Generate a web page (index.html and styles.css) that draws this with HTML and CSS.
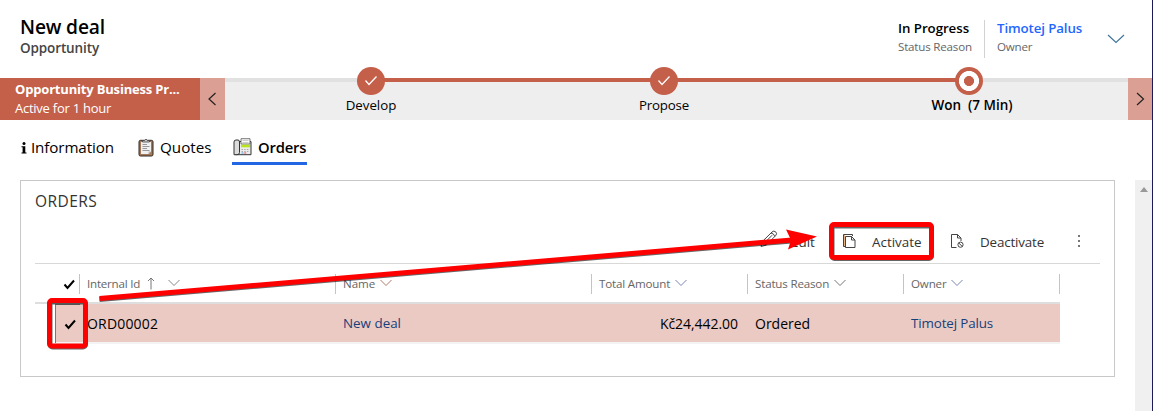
FILE: index.html
```html
<!DOCTYPE html>
<html lang="en">
<head>
<meta charset="utf-8">
<title>New deal - Opportunity</title>
<link rel="stylesheet" href="styles.css">
</head>
<body>
<div class="app">
  <header class="header">
    <div class="record">
      <h1 class="record-title">New deal</h1>
      <div class="record-type">Opportunity</div>
    </div>
    <div class="header-fields">
      <div class="field field-status">
        <div class="field-value status-value">In Progress</div>
        <div class="field-label">Status Reason</div>
      </div>
      <div class="field field-owner">
        <div class="field-value owner-value">Timotej Palus</div>
        <div class="field-label">Owner</div>
      </div>
      <svg class="header-chevron" width="18" height="10" viewBox="0 0 18 10"><path d="M1 1l8 7.500L17 1"/></svg>
    </div>
  </header>

  <section class="process">
    <div class="process-name">
      <div class="process-title">Opportunity Business Pr...</div>
      <div class="process-time">Active for 1 hour</div>
    </div>
    <div class="process-nav prev"><svg width="10" height="14" viewBox="0 0 10 14"><path d="M7.500 1L1 7l6.500 6"/></svg></div>
    <div class="stages">
      <div class="stage stage-first">
        <div class="node"><svg width="14" height="12" viewBox="0 0 14 12"><path d="M1.500 5.500l3.500 4L12.500 1.500"/></svg></div>
        <div class="stage-name">Develop</div>
      </div>
      <div class="stage stage-done">
        <div class="node"><svg width="14" height="12" viewBox="0 0 14 12"><path d="M1.500 5.500l3.500 4L12.500 1.500"/></svg></div>
        <div class="stage-name propose">Propose</div>
      </div>
      <div class="stage stage-current">
        <div class="node node-current"></div>
        <div class="stage-name current-name">Won&nbsp; (7 Min)</div>
      </div>
    </div>
    <div class="process-nav next"><svg width="10" height="14" viewBox="0 0 10 14"><path d="M2 1l6.500 6L2 13"/></svg></div>
  </section>

  <nav class="tabs">
    <div class="tab tab-info">
      <svg width="6" height="12" viewBox="0 0 6 12"><circle cx="3" cy="1.600" r="1.500"/><path d="M.5 4.200H4.300V10.500H5.500V11.500H.5V10.500H1.600V5.200H.5z"/></svg>
      <span>Information</span>
    </div>
    <div class="tab tab-quotes">
      <svg width="16" height="19" viewBox="0 0 16 19">
        <rect x="1" y="2.300" width="14" height="15.700" rx="1.500" fill="#a5785a" stroke="#2e2825"/>
        <path d="M3 4h10v9.500L10.500 16H3z" fill="#f0f0f0"/>
        <path d="M10.500 16v-2.500H13z" fill="#b8b8b8"/>
        <path d="M4.500 4V2.500h2Q8-.3 9.500 2.500h2V4z" fill="#ccc" stroke="#444" stroke-width=".8"/>
        <path d="M4.500 6.500h4.500M4.500 8.500h7M4.500 10.500h4.500M4.500 12.500h7" stroke="#999"/>
      </svg>
      <span>Quotes</span>
    </div>
    <div class="tab tab-orders">
      <svg width="19" height="18" viewBox="0 0 19 18">
        <path d="M6 3.500h12v13.200H2.500z" fill="#ececec" stroke="#333"/>
        <path d="M1 4Q1 2 3 2h2Q6.500 2 6.500 4v10.500Q6.500 16.700 4 16.700H1z" fill="#dcdcdc" stroke="#333"/>
        <path d="M8 6V.7h9V6z" fill="#fafafa" stroke="#555" stroke-width=".8"/>
        <path d="M9.500 2.500h6M9.500 4.500h6" stroke="#ccc"/>
        <path d="M8 6.700h9v2.600H8z" fill="#b9e51d"/>
        <path d="M8.500 11.500h1.500m1.200 0h1.500m1.200 0h1.500m-6.900 2h1.500m1.200 0h1.500m1.200 0h1.500" stroke="#aaa"/>
        <path d="M8.500 15h2" stroke="#39a4e8"/><path d="M11.200 15h2" stroke="#e64553"/>
      </svg>
      <span>Orders</span>
    </div>
  </nav>

  <div class="body">
    <section class="panel">
      <h2 class="panel-title">ORDERS</h2>
      <div class="toolbar">
        <div class="command edit">
          <svg width="18" height="18" viewBox="0 0 18 18"><path d="M1 16.500l1.200-4.800L12 2q1.700-1.700 3.600-.2 1.900 1.700.2 3.700L6 15.200zM2.300 11.700q2.700.2 3.600 3.400M11 3q3 .5 3.800 3.400M4.500 13L12 5.300"/></svg>
          <span>Edit</span>
        </div>
        <div class="command activate">
          <svg width="14" height="16" viewBox="0 0 14 16"><path class="tint" d="M2 13.500V2"/><path d="M3 13.500H1.500V1.500h9V3M3.500 3.500h6l3.500 3.500v7.500H3.500zM9.500 3.500V7H13"/></svg>
          <span>Activate</span>
        </div>
        <div class="command deactivate">
          <svg width="14" height="16" viewBox="0 0 14 16"><path d="M6.500 14.500h-5V1.500h6l3.500 3.500v3M7.500 1.500V5H11"/><circle cx="10.500" cy="11.700" r="2.600"/><path d="M8.700 9.900l3.600 3.600"/></svg>
          <span>Deactivate</span>
        </div>
        <svg class="more" width="4" height="14" viewBox="0 0 4 14"><path d="M1 1h2v2H1zM1 6h2v2H1zM1 11h2v2H1z"/></svg>
      </div>

      <div class="grid">
        <div class="grid-head">
          <div class="head-cell head-check"><svg class="tick" width="13" height="11" viewBox="0 0 13 11"><path d="M1.500 5.500l3 3.500 6.500-7.500"/></svg></div>
          <div class="head-cell"><span class="h-id">Internal Id</span><svg class="sort" width="8" height="13" viewBox="0 0 8 13"><path d="M4 12.500V1M1 4l3-3 3 3"/></svg><svg class="chev chev-id" width="12" height="8" viewBox="0 0 12 8"><path d="M.5 1L6 6.500 11.500 1"/></svg></div>
          <div class="head-cell"><span class="h-name">Name</span><svg class="chev chev-warm" width="12" height="8" viewBox="0 0 12 8"><path d="M.5 1L6 6.500 11.500 1"/></svg></div>
          <div class="head-cell"><span class="h-total">Total Amount</span><svg class="chev chev-blue" width="12" height="8" viewBox="0 0 12 8"><path d="M.5 1L6 6.500 11.500 1"/></svg></div>
          <div class="head-cell"><span class="h-status">Status Reason</span><svg class="chev" width="12" height="8" viewBox="0 0 12 8"><path d="M.5 1L6 6.500 11.500 1"/></svg></div>
          <div class="head-cell head-last"><span class="h-owner">Owner</span><svg class="chev chev-blue" width="12" height="8" viewBox="0 0 12 8"><path d="M.5 1L6 6.500 11.500 1"/></svg></div>
        </div>
        <div class="grid-row">
          <div class="cell cell-check"><svg class="tick" width="13" height="11" viewBox="0 0 13 11"><path d="M1.500 5.500l3 3.500 6.500-7.500"/></svg></div>
          <div class="cell cell-id">ORD00002</div>
          <div class="cell link link-deal">New deal</div>
          <div class="cell cell-total">Kč24,442.00</div>
          <div class="cell">Ordered</div>
          <div class="cell link link-owner">Timotej Palus</div>
        </div>
      </div>
    </section>
    <div class="scrollbar"><svg width="8" height="5" viewBox="0 0 8 5"><path d="M4 0L8 5H0z"/></svg></div>
  </div>

  <svg class="annotations" width="1153" height="411" viewBox="0 0 1153 411">
    <g class="shadow">
      <rect x="50" y="301" width="35.500" height="45" rx="2.500"/>
      <rect x="832" y="225" width="99.500" height="32.500" rx="2.500"/>
      <path d="M99.500 298.500L792 240"/>
    </g>
    <g class="mark">
      <rect x="49.500" y="300.500" width="36" height="45.500" rx="2.500"/>
      <rect x="831.500" y="224.500" width="100" height="33" rx="2.500"/>
      <path d="M99.500 298.500L792 240"/>
      <path class="arrowhead" d="M817 236.500L786 229.500 791 240 788 249.500z"/>
    </g>
  </svg>
</div>
</body>
</html>
```
FILE: styles.css
```css
* { box-sizing: border-box; }
body { margin: 0; background: #fff; color: #000; font-family: "Open Sans", "Noto Sans", sans-serif; overflow: hidden; }
svg { display: block; flex: none; fill: none; stroke-width: 1; }
.app { position: relative; width: 1153px; height: 411px; border-right: 1px solid #1d1a59; white-space: nowrap; }

/* Record header */
.header { height: 78px; display: flex; justify-content: space-between; padding: 15px 27px 0 20px; }
.record-title { margin: 0; font-size: 19.2px; line-height: 24px; font-weight: 600; letter-spacing: -.15px; }
.record-type { font-size: 13.5px; line-height: 18px; font-weight: 600; letter-spacing: -.12px; color: #444; }
.header-fields { display: flex; }
.field { height: 38px; margin-top: 5px; }
.field-status { width: 87px; border-right: 1px solid #d2d2d2; }
.field-owner { width: 122px; padding-left: 12px; }
.field-value { font-size: 13.3px; line-height: 18px; margin-top: -1px; font-weight: 600; }
.status-value { letter-spacing: -.06px; }
.owner-value { letter-spacing: -.12px; color: #2266ff; }
.field-label { font-size: 11.6px; line-height: 18px; margin-top: 1px; letter-spacing: -.2px; color: #666; }
.header-chevron { margin-top: 19px; stroke: #41759a; stroke-width: 1.2; }

/* Business process flow */
.process { height: 42px; display: flex; }
.process-name { width: 200px; padding: 2px 0 0 15px; background: #c45f4a; color: #fff; }
.process-title { font-size: 13px; line-height: 18px; font-weight: 700; letter-spacing: -.18px; }
.process-time { font-size: 13px; line-height: 20px; letter-spacing: -.25px; }
.process-nav { width: 25px; display: flex; align-items: center; justify-content: center; background: #dc9f93; stroke: #222; }
.process-nav svg { stroke-width: 1.2; }
.process-nav.next { width: 24px; }
.stages { width: 903px; display: grid; grid-template-columns: 292px 294px 317px; background: #eee; }
.stage { display: flex; flex-direction: column; align-items: center; background: linear-gradient(#c45f4a, #c45f4a) no-repeat; background-size: 100% 4px; }
.stage-first { background-image: linear-gradient(90deg, #e1e1e1 50%, #c45f4a 50%); }
.stage-current { padding-right: 2px; background-image: linear-gradient(90deg, #c45f4a 50%, #e1e1e1 50%); }
.node { width: 28px; height: 28px; margin-top: -11px; border-radius: 50%; background: #c45f4a; display: flex; align-items: center; justify-content: center; stroke: #fff; }
.node svg { stroke-width: 1.3; }
.node-current { background: radial-gradient(circle, #c45f4a 0 4.700px, #fff 5.300px 9.700px, #c45f4a 10.300px); }
.stage-name { font-size: 13.3px; line-height: 18px; margin-top: 1px; }
.propose { letter-spacing: -.2px; }
.current-name { font-size: 13.5px; font-weight: 600; margin-left: 7px; }

/* Tabs */
.tabs { height: 60px; padding: 15px 0 0 21px; display: flex; align-items: flex-start; font-size: 15.200px; line-height: 24px; }
.tab { height: 30px; display: flex; align-items: flex-start; }
.tab-info { width: 117px; gap: 4px; letter-spacing: -.12px; }
.tab-info svg { margin-top: 7px; fill: #000; }
.tab-quotes { width: 94px; gap: 6px; }
.tab-quotes svg { margin-top: 3px; }
.tab-orders { width: 75px; height: 30px; padding-left: 1px; gap: 6px; border-bottom: 3px solid #2266e3; font-size: 14.800px; font-weight: 600; letter-spacing: -.2px; }
.tab-orders svg { margin-top: 3px; }

/* Content */
.body { display: flex; justify-content: space-between; height: 231px; }
.panel { width: 1095px; height: 197px; margin-left: 20px; padding: 8px 14px 0; border: 1px solid #c8c8c8; }
.panel-title { margin: 0; font-size: 15.500px; line-height: 24px; font-weight: 400; letter-spacing: .45px; color: #333; }
.toolbar { height: 51px; padding: 15px 19px 0 0; display: flex; justify-content: flex-end; border-bottom: 1px solid #d8d8d8; }
.command { height: 28px; display: flex; align-items: center; font-size: 13.400px; color: #333; stroke: #444; }
.command span { stroke: none; }
.edit { width: 82px; gap: 13px; }
.edit svg { margin-top: -6px; }
.activate { width: 108px; gap: 16px; }
.activate svg, .deactivate svg { margin-top: -2px; }
.tint { stroke: #e9b384; stroke-width: 2; }
.deactivate { width: 127px; gap: 16px; letter-spacing: -.16px; }
.more { margin-top: 6px; fill: #777; }

.grid { width: 1025px; }
.grid-head { height: 40px; padding: 10px 0 0 20px; display: grid; grid-template-columns: 25px 256px 256px 156px 156px 156px; border-bottom: 2px solid #dedede; }
.head-cell { height: 20px; padding: 0 0 2px 7px; display: flex; align-items: center; gap: 5px; border-right: 1px solid #c4c4c4; font-size: 11.600px; letter-spacing: -.18px; color: #666; }
.head-check { padding: 0 0 0 8px; }
.tick { stroke: #000; stroke-width: 2; }
.sort { margin-left: 2px; margin-top: 0; stroke: #777; }
.chev { margin-top: 0; stroke: #777; }
.chev-id { margin-left: 8px; stroke: #888; }
.chev-warm { stroke: #b07a6a; }
.chev-blue { stroke: #7b83b5; }
.h-id { letter-spacing: -.23px; }
.h-name { letter-spacing: -.05px; }
.grid-row { height: 40px; margin-left: 20px; display: grid; grid-template-columns: 25px 256px 256px 156px 156px 156px; background: #ebcac4; border-bottom: 2px solid #f3f3f3; }
.cell { padding-left: 7px; font-size: 14px; line-height: 39px; }
.cell-check { display: flex; align-items: center; padding-left: 8px; border-left: 1px solid #777; border-top: 1px solid #777; }
.cell-id { letter-spacing: .18px; }
.cell-total { padding: 0 10px 0 0; text-align: right; letter-spacing: -.05px; }
.link { color: #174078; font-size: 13.400px; }
.link-owner { letter-spacing: -.14px; }

.scrollbar { width: 17px; display: flex; justify-content: center; padding-top: 7px; background: #f0f0f0; }
.scrollbar svg { fill: #999; }

/* Callouts over the page */
.annotations { position: absolute; left: 0; top: 0; pointer-events: none; }
.mark { stroke: #f00; stroke-width: 5; }
.shadow { stroke: rgba(0, 0, 0, .6); stroke-width: 5; transform: translateY(1px); }
.arrowhead { fill: #f00; stroke: none; }
```
